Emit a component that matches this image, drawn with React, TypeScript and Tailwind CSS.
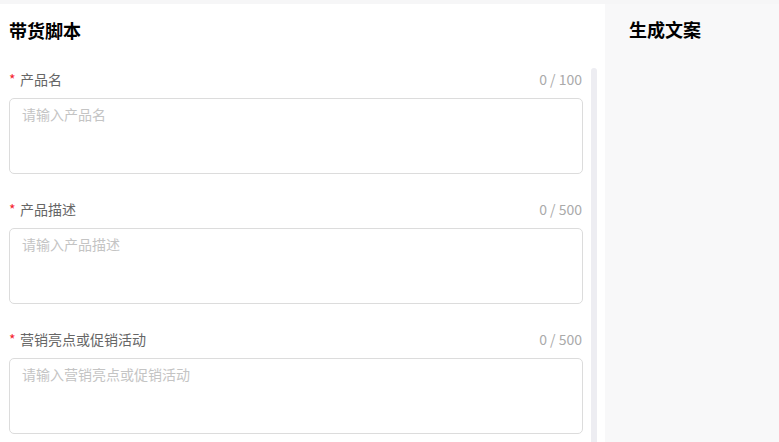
import { useState } from "react";

const fields = [
  { label: "产品名", placeholder: "请输入产品名", max: 100 },
  { label: "产品描述", placeholder: "请输入产品描述", max: 500 },
  { label: "营销亮点或促销活动", placeholder: "请输入营销亮点或促销活动", max: 500 },
];

function Field({ label, placeholder, max }: { label: string; placeholder: string; max: number }) {
  const [value, setValue] = useState("");
  return (
    <div className="mb-6">
      <div className="flex items-center justify-between h-[22px] text-[14px]">
        <div className="flex items-center text-[#666]">
          <span className="text-[#f5222d] w-[11px] text-[14px] leading-none">*</span>
          <span>{label}</span>
        </div>
        <span className="text-[#aaa] pr-px">
          {value.length} / {max}
        </span>
      </div>
      <textarea
        value={value}
        maxLength={max}
        onChange={(e) => setValue(e.target.value)}
        placeholder={placeholder}
        className="mt-2 block w-full h-[76px] resize-none rounded-[5px] border border-[#dcdcdc] px-3 py-[5px] text-[14px] leading-5 text-[#333] placeholder:text-[#c4c4c4] outline-none"
      />
    </div>
  );
}

export default function App() {
  return (
    <div
      className="w-[779px] h-[442px] overflow-hidden flex flex-col bg-white"
      style={{ fontFamily: '"Noto Sans CJK SC", "Liberation Sans", sans-serif' }}
    >
      <div className="h-1 bg-[#f6f6f7] shrink-0" />
      <div className="flex flex-1 min-h-0">
        {/* Left: form */}
        <div className="w-[605px] flex flex-col min-h-0">
          <div className="h-[64px] shrink-0 flex items-center pl-[9px] pb-[12px]">
            <h1 className="text-[18px] font-bold text-black">带货脚本</h1>
          </div>
          <div className="flex flex-1 min-h-0">
            <div className="w-[583px] pl-[9px]">
              {fields.map((f) => (
                <Field key={f.label} {...f} />
              ))}
            </div>
            <div className="ml-2 w-[6px] bg-[#ededf2] rounded-t-full" />
          </div>
        </div>
        {/* Right: output */}
        <div className="flex-1 bg-[#f8f8f9] pl-6">
          <div className="h-[50px] flex items-center">
            <h2 className="text-[18px] font-bold text-black">生成文案</h2>
          </div>
        </div>
      </div>
    </div>
  );
}
